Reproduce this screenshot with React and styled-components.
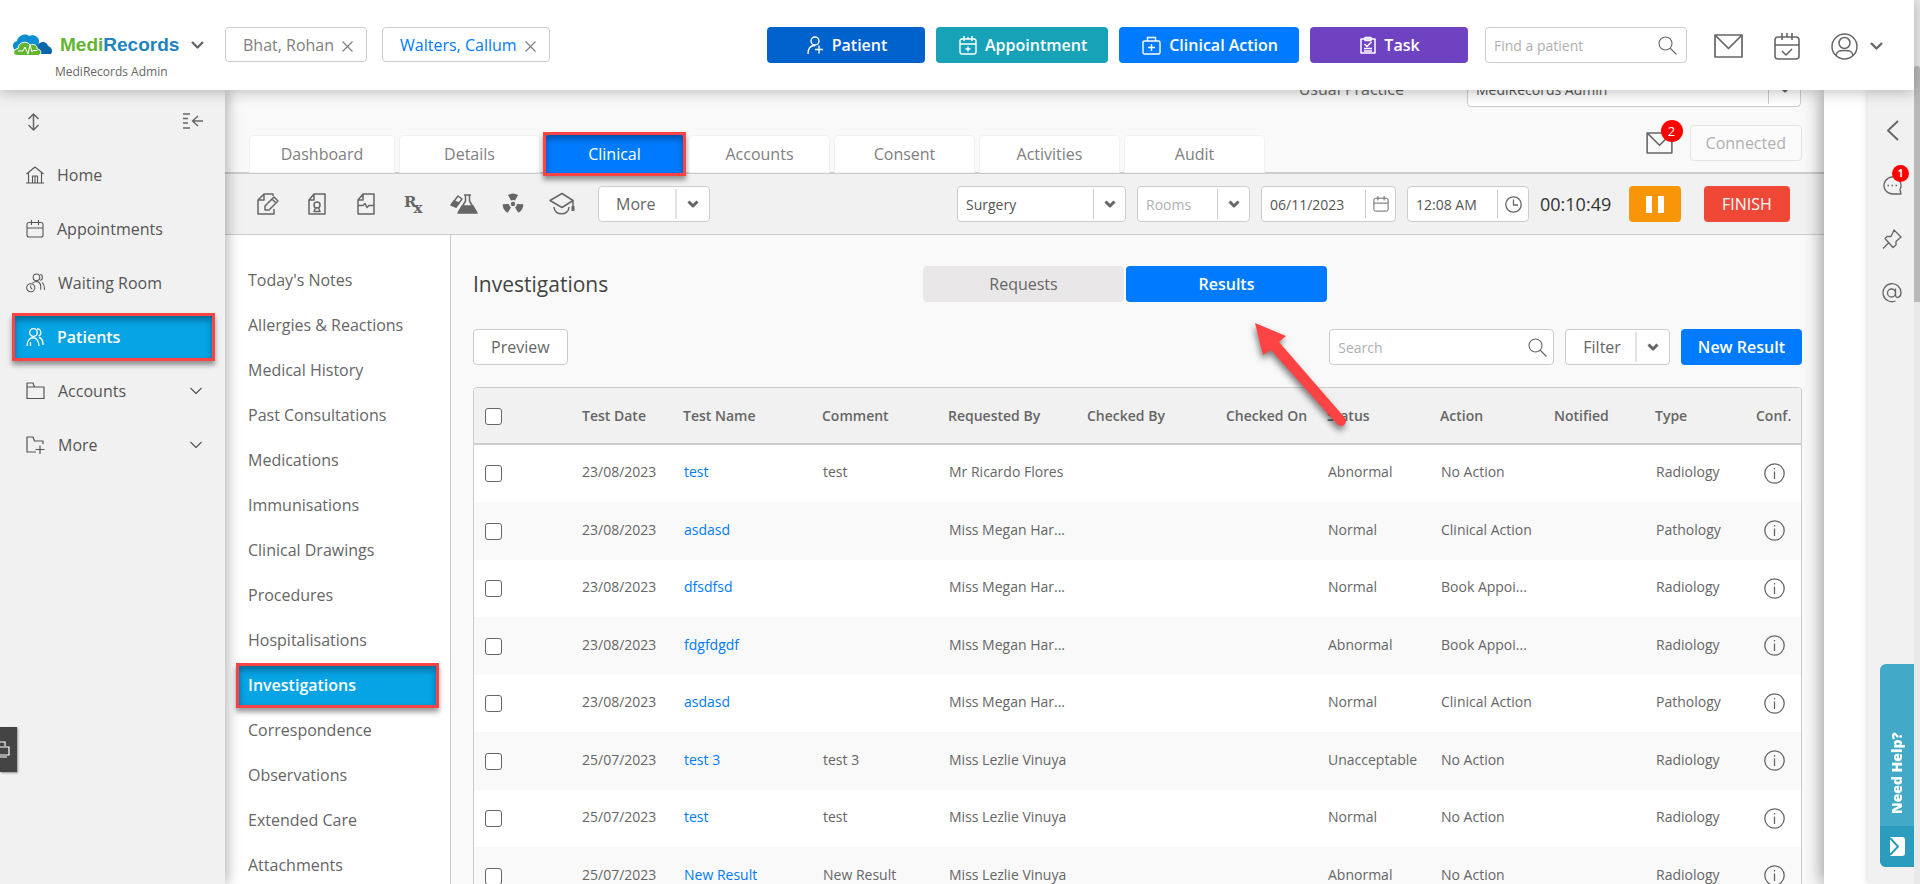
import React, { useState } from 'react';
import styled, { createGlobalStyle, css } from 'styled-components';

const GlobalStyle = createGlobalStyle`
  * {
    box-sizing: border-box;
  }

  body {
    margin: 0;
    background: #ffffff;
    color: #666666;
    font-family: "Open Sans", "Noto Sans", sans-serif;
    font-size: 14px;
    overflow: hidden;
  }

  button, input, select {
    font-family: inherit;
    color: inherit;
  }

  button {
    cursor: pointer;
  }

  svg {
    display: block;
    flex: none;
  }
`;

/* ---------- shell ---------- */

const Page = styled.div`
  display: flex;
  height: 100vh;
`;

const Shell = styled.div`
  flex: 1;
  min-width: 0;
  display: flex;
  flex-direction: column;
`;

const ScrollTrack = styled.div`
  width: 6px;
  padding-top: 66px;
  background: #e9e9e9;
`;

const ScrollThumb = styled.div`
  height: 236px;
  border-radius: 3px 3px 0 0;
  background: #b9b9b9;
`;

const Body = styled.div`
  flex: 1;
  min-height: 0;
  display: flex;
  overflow: hidden;
`;

/* ---------- header ---------- */

const Header = styled.header`
  position: relative;
  z-index: 5;
  display: flex;
  align-items: flex-start;
  height: 90px;
  padding: 27px 31px 0 12px;
  background: #ffffff;
  box-shadow: 0 2px 14px rgba(0, 0, 0, 0.25);
`;

const Brand = styled.div`
  width: 213px;
`;

const BrandRow = styled.button`
  display: flex;
  align-items: center;
  padding: 0;
  border: 0;
  background: none;
  height: 36px;
`;

const BrandName = styled.span`
  margin: 0 12px 0 8px;
  font-family: "Liberation Sans", Arial, sans-serif;
  font-size: 19px;
  font-weight: 700;
  color: #2183bd;

  b {
    color: #62b530;
  }
`;

const BrandAccount = styled.div`
  padding-left: 43px;
  font-size: 12px;
  line-height: 18px;
`;

const PatientChips = styled.div`
  display: flex;
  gap: 15px;
  flex: 1;
`;

const Chip = styled.div`
  display: flex;
  align-items: center;
  gap: 8px;
  height: 35px;
  padding: 0 13px 0 17px;
  border: 1px solid #cccccc;
  border-radius: 4px;
  white-space: nowrap;

  a {
    font-size: 16px;
    line-height: 20px;
    text-decoration: none;
    color: ${props => (props.$active ? '#007bff' : '#808080')};
  }

  button {
    padding: 3px 0 0;
    border: 0;
    background: none;
    color: #808080;
  }
`;

const HeaderActions = styled.div`
  display: flex;
  gap: 11px;
`;

const ActionButton = styled.button`
  display: flex;
  align-items: center;
  justify-content: center;
  gap: 8px;
  min-width: 158px;
  height: 36px;
  padding: 0 21px 0 23px;
  border: 0;
  border-radius: 4px;
  background: ${props => props.$color};
  color: #ffffff;
  font-size: 16px;
  font-weight: 600;
  white-space: nowrap;
`;

const SearchBox = styled.div`
  display: flex;
  align-items: center;
  width: ${props => props.$width};
  height: 36px;
  padding: 0 6px 0 8px;
  border: 1px solid #cccccc;
  border-radius: 4px;
  background: #ffffff;

  input {
    flex: 1;
    min-width: 0;
    padding: 0;
    border: 0;
    outline: 0;
    background: none;
    font-size: 14px;
  }

  input::placeholder {
    color: #b0b0b0;
  }
`;

const PatientSearch = styled(SearchBox)`
  margin-left: 17px;
  padding-right: 9px;
`;

const HeaderIcons = styled.div`
  display: flex;
  align-items: center;
  gap: 31px;
  height: 38px;
  margin-left: 27px;
`;

const IconButton = styled.button`
  position: relative;
  display: flex;
  align-items: center;
  justify-content: center;
  gap: 12px;
  padding: 0;
  border: 0;
  background: none;
  color: #666666;
`;

/* ---------- left sidebar ---------- */

const Sidebar = styled.nav`
  position: relative;
  z-index: 3;
  flex: none;
  width: 225px;
  background: #f1f1f1;
  box-shadow: 3px 0 12px rgba(0, 0, 0, 0.28);
`;

const SidebarTools = styled.div`
  display: flex;
  align-items: flex-start;
  justify-content: space-between;
  padding: 23px 22px 0 27px;
  height: 61px;
`;

const highlightFrame = css`
  &::after {
    content: "";
    position: absolute;
    inset: 0;
    border: 3px solid #fd4343;
    box-shadow: 0 4px 5px rgba(0, 0, 0, 0.4), inset 0 4px 6px rgba(0, 0, 0, 0.35);
    pointer-events: none;
  }
`;

const SidebarItem = styled.a`
  position: relative;
  display: flex;
  align-items: center;
  gap: 13px;
  height: 48px;
  margin: 0 10px 6px 12px;
  padding: 0 13px 0 14px;
  color: ${props => (props.$active ? '#ffffff' : '#555555')};
  background: ${props => (props.$active ? '#06a3e5' : 'none')};
  font-size: 16px;
  font-weight: ${props => (props.$active ? 600 : 500)};
  text-decoration: none;

  span {
    flex: 1;
  }

  ${props => props.$active && highlightFrame}
`;

const SideFlag = styled.button`
  position: absolute;
  left: 0;
  top: 637px;
  display: flex;
  align-items: center;
  width: 17px;
  height: 45px;
  padding: 0;
  border: 0;
  background: #444444;
  box-shadow: 1px 1px 2px rgba(0, 0, 0, 0.4);
`;

/* ---------- patient record ---------- */

const Record = styled.main`
  flex: 1;
  min-width: 0;
  display: flex;
  flex-direction: column;
  background: #f9f9f9;
`;

const PracticeRow = styled.div`
  display: flex;
  align-items: center;
  justify-content: flex-end;
  gap: 63px;
  margin-top: -19px;
  padding-right: 23px;
  font-size: 14px;

  label {
    font-size: 16px;
    font-weight: 500;
  }
`;

const TabRow = styled.div`
  display: flex;
  align-items: flex-start;
  justify-content: space-between;
  height: 67px;
  padding: 18px 22px 0 24px;
  border-bottom: 2px solid #cccccc;
`;

const Tabs = styled.div`
  display: flex;
  gap: 4px;
  padding-top: 10px;
`;

const Tab = styled.button`
  position: relative;
  width: 141px;
  height: 38px;
  padding: 0;
  border: 1px solid #f1f1f1;
  border-radius: 4px 4px 0 0;
  background: ${props => (props.$active ? '#007bff' : '#ffffff')};
  color: ${props => (props.$active ? '#ffffff' : '#808080')};
  font-size: 16px;

  &:first-child {
    width: 146px;
  }

  ${props => props.$active && css`
    border: 0;
    ${highlightFrame}

    &::after {
      inset: -3px -1px;
    }
  `}
`;

const RecordStatus = styled.div`
  display: flex;
  align-items: center;
  gap: 17px;
`;

const Badge = styled.span`
  position: absolute;
  left: ${props => props.$left}px;
  top: ${props => props.$top}px;
  width: ${props => props.$size}px;
  height: ${props => props.$size}px;
  border-radius: 50%;
  background: #ff0000;
  color: #ffffff;
  font-size: ${props => (props.$size > 20 ? 13 : 10)}px;
  font-weight: ${props => (props.$size > 20 ? 400 : 700)};
  line-height: ${props => props.$size}px;
  text-align: center;
`;

const PlainButton = styled.button`
  height: 36px;
  padding: 0 17px;
  border: 1px solid #cccccc;
  border-radius: 4px;
  background: #ffffff;
  font-size: 16px;
  font-weight: 500;
  color: #666666;

  &:disabled {
    padding: 0 15px;
    border-color: #e4e4e4;
    background: #fbfbfb;
    color: #b0b0b0;
  }
`;

const Toolbar = styled.div`
  display: flex;
  align-items: center;
  height: 61px;
  padding: 0 34px 0 18px;
  border-bottom: 1px solid #cccccc;
  background: #f1f1f1;
`;

const ToolIcons = styled.div`
  display: grid;
  grid-template-columns: repeat(7, 49px);
  margin-right: 12px;
`;

const SplitButton = styled.div`
  display: flex;
  align-items: center;
  height: 36px;
  border: 1px solid #cccccc;
  border-radius: 4px;
  background: #ffffff;

  button {
    height: 30px;
    padding: 0 ${props => props.$pad}px 0 17px;
    border: 0;
    background: none;
    font-size: 16px;
    font-weight: 500;
  }

  button + button {
    padding: 0 10px;
    border-left: 2px solid #e4e4e4;
  }
`;

const Fields = styled.div`
  display: flex;
  align-items: center;
  gap: 11px;
  margin-left: auto;
`;

const SelectBox = styled.div`
  display: flex;
  align-items: center;
  width: ${props => props.$width}px;
  height: 36px;
  padding-right: 9px;
  border: 1px solid #cccccc;
  border-radius: 4px;
  background: #ffffff;

  select {
    flex: 1;
    min-width: 0;
    height: 30px;
    margin-right: 10px;
    padding: 0 0 0 8px;
    border: 0;
    border-right: 1px solid #cccccc;
    outline: 0;
    background: none;
    appearance: none;
    font-size: 14px;
    color: ${props => (props.$empty ? '#b0b0b0' : '#555555')};
  }
`;

const PickerBox = styled.div`
  display: flex;
  align-items: center;
  width: ${props => props.$width}px;
  height: 36px;
  padding-right: 6px;
  border: 1px solid #cccccc;
  border-radius: 4px;
  background: #ffffff;

  input {
    flex: 1;
    min-width: 0;
    height: 28px;
    margin-right: 7px;
    padding: 0 0 0 8px;
    border: 0;
    border-right: 1px solid #cccccc;
    outline: 0;
    font-size: 14px;
    color: #555555;
  }
`;

const Timer = styled.span`
  width: 78px;
  font-size: 18px;
  color: #333333;
  white-space: nowrap;
`;

const PauseButton = styled.button`
  display: flex;
  align-items: center;
  justify-content: center;
  gap: 6px;
  width: 52px;
  height: 36px;
  margin-right: 12px;
  border: 0;
  border-radius: 4px;
  background: #f99509;

  i {
    width: 6px;
    height: 17px;
    background: #ffffff;
  }
`;

const FinishButton = styled.button`
  width: 86px;
  height: 36px;
  padding: 0;
  border: 0;
  border-radius: 4px;
  background: #f04836;
  color: #ffffff;
  font-size: 16px;
  font-weight: 500;
`;

const Columns = styled.div`
  flex: 1;
  min-height: 0;
  display: flex;
`;

const SectionMenu = styled.nav`
  flex: none;
  width: 226px;
  padding: 23px 11px 0 11px;
  border-right: 1px solid #cccccc;
  background: #ffffff;
`;

const SectionLink = styled.a`
  position: relative;
  display: block;
  height: 45px;
  padding: 0 12px;
  border-radius: 3px;
  background: ${props => (props.$active ? '#06a3e5' : 'none')};
  color: ${props => (props.$active ? '#ffffff' : '#666666')};
  font-size: 16px;
  font-weight: ${props => (props.$active ? 600 : 500)};
  line-height: 45px;
  text-decoration: none;
  white-space: nowrap;

  ${props => props.$active && highlightFrame}
`;

/* ---------- investigations ---------- */

const Panel = styled.section`
  flex: 1;
  min-width: 0;
  padding: 31px 22px 0;
`;

const PanelHead = styled.div`
  display: flex;
  align-items: center;
  height: 36px;
`;

const Title = styled.h1`
  width: 450px;
  margin: 0;
  color: #444444;
  font-size: 21px;
  font-weight: 500;
`;

const Segments = styled.div`
  position: relative;
  display: flex;
  gap: 2px;
`;

const Segment = styled.button`
  width: 201px;
  height: 36px;
  border: 0;
  border-radius: 4px;
  background: ${props => (props.$active ? '#007bff' : '#e9e7e8')};
  color: ${props => (props.$active ? '#ffffff' : '#666666')};
  font-size: 16px;
  font-weight: ${props => (props.$active ? 600 : 500)};
`;

const Pointer = styled.svg`
  position: absolute;
  left: 322px;
  top: 47px;
  z-index: 2;
  filter: drop-shadow(-1px 4px 3px rgba(0, 0, 0, 0.5));
  pointer-events: none;
`;

const PanelTools = styled.div`
  display: flex;
  gap: 11px;
  margin: 27px 0 22px;

  > :first-child {
    margin-right: auto;
  }
`;

const PrimaryButton = styled.button`
  height: 36px;
  padding: 0 17px;
  border: 0;
  border-radius: 4px;
  background: #007bff;
  color: #ffffff;
  font-size: 16px;
  font-weight: 600;
`;

const TableFrame = styled.div`
  border: 1px solid #cccccc;
  border-radius: 4px;
  overflow: hidden;
`;

const ResultTable = styled.table`
  width: 100%;
  border-collapse: collapse;
  table-layout: fixed;
  color: #666666;
  font-size: 14px;

  th, td {
    padding: 0;
    text-align: left;
    white-space: nowrap;
  }

  thead tr {
    height: 56px;
    border-bottom: 2px solid #cccccc;
    background: #f1f1f1;
  }

  th {
    font-weight: 600;
  }

  td {
    padding: 0 0 4px 1px;
  }

  td:nth-child(2) {
    padding-left: 0;
  }

  th:first-child {
    padding-left: 11px;
  }

  td:first-child {
    padding: 0 0 1px 11px;
  }

  td:last-child {
    padding: 0 0 1px 8px;
  }

  tbody tr {
    height: 58px;
    background: #ffffff;
  }

  tbody tr:nth-child(even) {
    background: #f9f9f9;
  }

  tbody tr:nth-child(2n + 3) {
    height: 57px;
  }

  td a {
    color: #007bff;
    text-decoration: none;
    font-weight: 500;
  }
`;

const Checkbox = styled.input`
  appearance: none;
  display: block;
  width: 17px;
  height: 17px;
  margin: 1px 0 0;
  border: 1px solid #666666;
  border-radius: 3px;
  background: #ffffff;
`;

/* ---------- right side ---------- */

const Gutter = styled.div`
  position: relative;
  z-index: 1;
  flex: none;
  width: 44px;
  background: #ffffff;
  box-shadow: -2px 0 18px rgba(0, 0, 0, 0.4);
`;

const Rail = styled.aside`
  position: relative;
  z-index: 2;
  flex: none;
  display: flex;
  flex-direction: column;
  align-items: center;
  gap: 34px;
  width: 46px;
  padding: 30px 0 0 2px;
  background: #f1f1f1;
  box-shadow: -1px 0 6px rgba(0, 0, 0, 0.14);
`;

const HelpTab = styled.button`
  position: absolute;
  right: 0;
  bottom: 17px;
  display: flex;
  flex-direction: column;
  align-items: center;
  width: 34px;
  height: 203px;
  padding: 0;
  border: 0;
  border-radius: 6px 0 0 6px;
  background: #42a9c9;
  overflow: hidden;
  color: #ffffff;

  span {
    flex: 1;
    padding-top: 12px;
    writing-mode: vertical-rl;
    transform: rotate(180deg);
    font-size: 14px;
    font-weight: 800;
    line-height: 34px;
    text-align: left;
  }

  div {
    display: flex;
    align-items: center;
    justify-content: center;
    width: 100%;
    height: 41px;
    background: #2b9cbd;
  }
`;

/* ---------- icons ---------- */

const Icon = ({ w = 20, h = w, box = `0 0 ${w} ${h}`, sw = 1.3, children }) => (
  <svg
    width={w}
    height={h}
    viewBox={box}
    fill="none"
    stroke="currentColor"
    strokeWidth={sw}
    strokeLinejoin="round"
    aria-hidden="true"
  >
    {children}
  </svg>
);

const CloudLogo = () => (
  <svg width="40" height="23" viewBox="0 0 40 23" aria-hidden="true">
    <path d="M3 16C0 14 0 8 5 7C6 1 14 -1 17 2C22 0 27 3 27 7L26 17Z" fill="#0a8fd2" />
    <path d="M23 20C19 17 22 12 26 11C28 7 35 7 36 12C40 13 41 18 39 20Z" fill="#0765a8" />
    <path d="M5 21.500C0 21 1 15 6 14.500C6 8 15 6 18 11C22 9 26 12 25 15C30 15 30 21 26 21.500Z" fill="#62b530" stroke="#ffffff" strokeWidth="1" />
    <path d="M6 17H11L13 13L16 20L18 11L20 18L21 16.500H25" fill="none" stroke="#ffffff" strokeWidth="1" />
  </svg>
);

const Caret = () => (
  <Icon w={12} h={8} sw={3}><path d="M1.500 1.500L6 6L10.500 1.500" /></Icon>
);

const WideCaret = () => (
  <Icon w={13} h={8} sw={2.4}><path d="M1 1L6.500 6.500L12 1" /></Icon>
);

const ThinCaret = () => (
  <Icon w={12} h={8} sw={1.1}><path d="M0.500 1L6 6.500L11.500 1" /></Icon>
);

const CloseIcon = () => (
  <Icon w={11} sw={1.2}><path d="M0.500 0.500L10.500 10.500M10.500 0.500L0.500 10.500" /></Icon>
);

const SearchIcon = () => (
  <Icon w={19} sw={1.1}><circle cx="7.500" cy="7.500" r="6.500" /><path d="M12 12L18.500 18.500" /></Icon>
);

const MailIcon = ({ w = 29, h = 24 }) => (
  <Icon w={w} h={h} box="0 0 29 24" sw={1.7}>
    <rect x="1" y="1" width="27" height="22" />
    <path d="M1 1L14.500 14.500L28 1" />
  </Icon>
);

const CalendarCheckIcon = () => (
  <Icon w={26} h={27} sw={1.6}>
    <rect x="1" y="4" width="24" height="22" rx="3" />
    <path d="M1 12H25M8 0V7M13 0V4M18 0V7M8 18L12 22L18 16" />
  </Icon>
);

const UserCircleIcon = () => (
  <Icon w={27} sw={1.5}>
    <circle cx="13.500" cy="13.500" r="12.500" />
    <circle cx="13.500" cy="10" r="5.500" />
    <path d="M5 22.500C6 17.500 9 17.500 13.500 17.500S21 17.500 22 22.500" />
  </Icon>
);

const PatientAddIcon = () => (
  <Icon w={17} h={18} sw={1.4}>
    <circle cx="8" cy="5" r="4" />
    <path d="M1 18C1 12 3 9.500 8 9.500M12 9.500V17.500M8 13.500H16" />
  </Icon>
);

const AppointmentAddIcon = () => (
  <Icon w={18} h={19} sw={1.4}>
    <rect x="1" y="3" width="16" height="15" rx="2" />
    <path d="M1 8H17M5 0V5M9 1V3M13 0V5M9 10.500V15.500M6.500 13H11.500" />
  </Icon>
);

const KitIcon = () => (
  <Icon w={19} h={19} sw={1.4}>
    <rect x="1" y="5" width="17" height="13" rx="1.500" />
    <path d="M5.500 5V1.500H13.500V5M9.500 8V15M6 11.500H13" />
  </Icon>
);

const TaskIcon = () => (
  <Icon w={16} h={18} sw={1.5}>
    <rect x="1" y="3" width="14" height="14" />
    <path d="M5 1.500H11V4.500H5ZM4.500 8L7 10.500L11.500 6M4 12.500H12M4 15H12" />
  </Icon>
);

const ResizeIcon = () => (
  <Icon w={13} h={18} sw={1.5}><path d="M6.500 1V17M1.500 6L6.500 1L11.500 6M1.500 12L6.500 17L11.500 12" /></Icon>
);

const CollapseIcon = () => (
  <Icon w={20} h={16} sw={1.4}>
    <path d="M0 1H7M0 5.500H5M0 10H5M0 15H7M9.500 8H20M15 3L9.500 8L15 13" />
  </Icon>
);

const HomeIcon = () => (
  <Icon w={18} h={18} sw={1.1}>
    <path d="M0.500 8L9 1L17.500 8M2.500 6.500V17M15.500 6.500V17M0 17H18M6.500 17V10H11.500V17M9 10V17" />
  </Icon>
);

const CalendarIcon = ({ w = 18 }) => (
  <Icon w={w} box="0 0 18 18" sw={1.1}>
    <rect x="1" y="2.500" width="16" height="14.500" rx="2" />
    <path d="M1 8H17M5.500 0V5M12.500 0V5" />
  </Icon>
);

const WaitingIcon = () => (
  <Icon w={19} h={20} box="0 0 20 20" sw={1.1}>
    <circle cx="11" cy="4" r="3.500" />
    <path d="M15 1C18 1 18 7 15 7M7 10C10 7.500 15 8 15.500 13V17M17 9.500C19 11 19.500 13 19.500 17" />
    <circle cx="5" cy="15" r="4.300" />
    <path d="M5 12.500V15L6.500 16.500" />
  </Icon>
);

const PatientsIcon = () => (
  <Icon w={18} h={18} sw={1.3}>
    <circle cx="7.500" cy="4.500" r="3.800" />
    <path d="M11 1C15.500 0 16 7 12.500 8M1 18C1 7 13 7 13 18M4.500 14V18M13 9.500C16 10 17 13 17 17" />
  </Icon>
);

const FolderIcon = () => (
  <Icon w={19} h={18} sw={1.2}><path d="M1 16.500V1H7L8.500 5H18V16.500ZM1 5H8.500" /></Icon>
);

const FolderAddIcon = () => (
  <Icon w={19} h={18} sw={1.2}><path d="M10 16H1V1H7L8.500 5H17V8M14 9.500V18M9.500 13.500H18.500" /></Icon>
);

const EditDocIcon = () => (
  <Icon w={24} h={24} sw={1.5}>
    <path d="M17 4V2H8L2 8V22H18V17M8 2V8H2" />
    <path d="M9 14L18 5L22 9L13 18H9ZM16 7L20 11" />
  </Icon>
);

const CertificateIcon = () => (
  <Icon w={18} h={24} sw={1.5}>
    <path d="M6 2H17V22H1V8ZM6 2V8H1" />
    <circle cx="9" cy="13" r="3" />
    <path d="M7.500 16L6 19.500H12L10.500 16" />
  </Icon>
);

const PulseDocIcon = () => (
  <Icon w={18} h={24} sw={1.5}>
    <path d="M6 2H17V22H1V8ZM6 2V8H1M1 13.500H6L8 11.500L10 15.500L12 13.500H17" />
  </Icon>
);

const RxIcon = () => (
  <svg width="24" height="24" viewBox="0 0 24 24" fill="#666666" aria-hidden="true">
    <text x="1" y="15" fontFamily="DejaVu Serif" fontWeight="700" fontSize="15">
      R<tspan dx="-3" dy="6">x</tspan>
    </text>
  </svg>
);

const LabIcon = () => (
  <Icon w={28} h={24} sw={1.5}>
    <path d="M14 3H21M15.500 3V9L9 20H26L19.500 9V3" />
    <path d="M12 14H23L27 21H8Z" fill="currentColor" />
    <path d="M2 12L8 4L12 7L6 15Z" />
    <path d="M1 13L4 9L9 11L6 15Z" fill="currentColor" />
  </Icon>
);

const RadiationIcon = () => (
  <Icon w={22} h={24} box="-11 -12 22 24" sw={0}>
    <g fill="currentColor">
      <circle r="2.200" />
      <path d="M-2 -3.500L-5 -9Q0 -12 5 -9L2 -3.500Q0 -4.500 -2 -3.500Z" />
      <path transform="rotate(120)" d="M-2 -3.500L-5 -9Q0 -12 5 -9L2 -3.500Q0 -4.500 -2 -3.500Z" />
      <path transform="rotate(240)" d="M-2 -3.500L-5 -9Q0 -12 5 -9L2 -3.500Q0 -4.500 -2 -3.500Z" />
    </g>
  </Icon>
);

const GraduateIcon = () => (
  <Icon w={26} h={24} sw={1.5}>
    <path d="M1 8.500L13 1.500L24 8.500L13 15.500ZM24 8.500V16M5 15C5 24 20 24 20 15" />
    <path d="M24 14V19" strokeWidth="3" />
  </Icon>
);

const ClockIcon = () => (
  <Icon w={17} sw={1.3}><circle cx="8.500" cy="8.500" r="7.700" /><path d="M8.500 3.500V9H13" /></Icon>
);

const InfoIcon = () => (
  <Icon w={21} sw={1.3}>
    <circle cx="10.500" cy="10.500" r="9.700" />
    <path d="M10.500 8.500V16M10.500 5V6.500" />
  </Icon>
);

const BackIcon = () => (
  <Icon w={13} h={21} sw={1.9}><path d="M12 1L2 10.500L12 20" /></Icon>
);

const ChatIcon = () => (
  <Icon w={20} sw={1.3}>
    <path d="M18 14.500L19 19H10A8.500 8.500 0 1 1 18 14.500Z" />
    <path d="M5.500 10.500H7M9.500 10.500H11M13.500 10.500H15" />
  </Icon>
);

const PinIcon = () => (
  <Icon w={20} sw={1.3}>
    <path d="M12 1L19 8L14 12.500V16L11 18.500L3 9.500L5 7.500L9 7.500Z" />
    <path d="M7 13.500L1 19.500" />
  </Icon>
);

const AtIcon = () => (
  <Icon w={20} sw={1.3}>
    <circle cx="9.500" cy="10" r="4" />
    <path d="M13.500 5.500V12C13.500 16 19 15 19 10A9 9 0 1 0 13.500 18" />
  </Icon>
);

/* ---------- data ---------- */

const sidebarItems = [
  { label: 'Home', icon: HomeIcon },
  { label: 'Appointments', icon: CalendarIcon },
  { label: 'Waiting Room', icon: WaitingIcon },
  { label: 'Patients', icon: PatientsIcon },
  { label: 'Accounts', icon: FolderIcon, expandable: true },
  { label: 'More', icon: FolderAddIcon, expandable: true },
];

const tabs = ['Dashboard', 'Details', 'Clinical', 'Accounts', 'Consent', 'Activities', 'Audit'];

const tools = [
  { label: 'Note', icon: EditDocIcon },
  { label: 'Certificate', icon: CertificateIcon },
  { label: 'Report', icon: PulseDocIcon },
  { label: 'Prescription', icon: RxIcon },
  { label: 'Pathology', icon: LabIcon },
  { label: 'Radiology', icon: RadiationIcon },
  { label: 'Education', icon: GraduateIcon },
];

const sections = [
  "Today's Notes",
  'Allergies & Reactions',
  'Medical History',
  'Past Consultations',
  'Medications',
  'Immunisations',
  'Clinical Drawings',
  'Procedures',
  'Hospitalisations',
  'Investigations',
  'Correspondence',
  'Observations',
  'Extended Care',
  'Attachments',
];

const columns = [
  { label: 'Test Date', width: 101 },
  { label: 'Test Name', width: 139 },
  { label: 'Comment', width: 126 },
  { label: 'Requested By', width: 139 },
  { label: 'Checked By', width: 139 },
  { label: 'Checked On', width: 101 },
  { label: 'Status', width: 113 },
  { label: 'Action', width: 114 },
  { label: 'Notified', width: 101 },
  { label: 'Type', width: 101 },
  { label: 'Conf.', width: 46 },
];

const results = [
  ['23/08/2023', 'test', 'test', 'Mr Ricardo Flores', 'Abnormal', 'No Action', 'Radiology'],
  ['23/08/2023', 'asdasd', '', 'Miss Megan Har...', 'Normal', 'Clinical Action', 'Pathology'],
  ['23/08/2023', 'dfsdfsd', '', 'Miss Megan Har...', 'Normal', 'Book Appoi...', 'Radiology'],
  ['23/08/2023', 'fdgfdgdf', '', 'Miss Megan Har...', 'Abnormal', 'Book Appoi...', 'Radiology'],
  ['23/08/2023', 'asdasd', '', 'Miss Megan Har...', 'Normal', 'Clinical Action', 'Pathology'],
  ['25/07/2023', 'test 3', 'test 3', 'Miss Lezlie Vinuya', 'Unacceptable', 'No Action', 'Radiology'],
  ['25/07/2023', 'test', 'test', 'Miss Lezlie Vinuya', 'Normal', 'No Action', 'Radiology'],
  ['25/07/2023', 'New Result', 'New Result', 'Miss Lezlie Vinuya', 'Abnormal', 'No Action', 'Radiology'],
];

/* ---------- parts ---------- */

const TopBar = () => (
  <Header>
    <Brand>
      <BrandRow>
        <CloudLogo />
        <BrandName><b>Medi</b>Records</BrandName>
        <WideCaret />
      </BrandRow>
      <BrandAccount>MediRecords Admin</BrandAccount>
    </Brand>
    <PatientChips>
      <Chip>
        <a href="#rohan">Bhat, Rohan</a>
        <button aria-label="Close Bhat, Rohan"><CloseIcon /></button>
      </Chip>
      <Chip $active>
        <a href="#callum">Walters, Callum</a>
        <button aria-label="Close Walters, Callum"><CloseIcon /></button>
      </Chip>
    </PatientChips>
    <HeaderActions>
      <ActionButton $color="#0062cc"><PatientAddIcon />Patient</ActionButton>
      <ActionButton $color="#17a2b8"><AppointmentAddIcon />Appointment</ActionButton>
      <ActionButton $color="#007bff"><KitIcon />Clinical Action</ActionButton>
      <ActionButton $color="#6f42c1"><TaskIcon />Task</ActionButton>
    </HeaderActions>
    <PatientSearch $width="202px">
      <input type="text" aria-label="Find a patient" placeholder="Find a patient" />
      <SearchIcon />
    </PatientSearch>
    <HeaderIcons>
      <IconButton aria-label="Messages"><MailIcon /></IconButton>
      <IconButton aria-label="Calendar"><CalendarCheckIcon /></IconButton>
      <IconButton aria-label="Account"><UserCircleIcon /><WideCaret /></IconButton>
    </HeaderIcons>
  </Header>
);

const SideNav = () => (
  <Sidebar>
    <SidebarTools>
      <IconButton aria-label="Resize"><ResizeIcon /></IconButton>
      <IconButton aria-label="Collapse"><CollapseIcon /></IconButton>
    </SidebarTools>
    {sidebarItems.map(({ label, icon: ItemIcon, expandable }) => (
      <SidebarItem key={label} href={`#${label}`} $active={label === 'Patients'}>
        <ItemIcon />
        <span>{label}</span>
        {expandable && <ThinCaret />}
      </SidebarItem>
    ))}
    <SideFlag aria-label="Screen">
      <svg width="10" height="18" viewBox="0 0 10 18" fill="none" stroke="#ffffff" strokeWidth="1.200">
        <path d="M0 1H5V5M0 6H9V14H0M0 16H7" />
      </svg>
    </SideFlag>
  </Sidebar>
);

const ConsultToolbar = () => (
  <Toolbar>
    <ToolIcons>
      {tools.map(({ label, icon: ToolIcon }) => (
        <IconButton key={label} aria-label={label}><ToolIcon /></IconButton>
      ))}
    </ToolIcons>
    <SplitButton $pad={19}>
      <button>More</button>
      <button aria-label="Open more"><Caret /></button>
    </SplitButton>
    <Fields>
      <SelectBox $width={169}>
        <select aria-label="Location" defaultValue="Surgery"><option>Surgery</option></select>
        <Caret />
      </SelectBox>
      <SelectBox $width={113} $empty>
        <select aria-label="Rooms" defaultValue="Rooms"><option>Rooms</option></select>
        <Caret />
      </SelectBox>
      <PickerBox $width={135}>
        <input type="text" aria-label="Date" defaultValue="06/11/2023" />
        <CalendarIcon w={16} />
      </PickerBox>
      <PickerBox $width={122}>
        <input type="text" aria-label="Time" defaultValue="12:08 AM" />
        <ClockIcon />
      </PickerBox>
      <Timer>00:10:49</Timer>
      <PauseButton aria-label="Pause"><i /><i /></PauseButton>
      <FinishButton>FINISH</FinishButton>
    </Fields>
  </Toolbar>
);

const Results = () => {
  const [selected, setSelected] = useState([]);
  const allSelected = selected.length === results.length;

  const toggleRow = (index) => {
    setSelected(selected.includes(index) ? selected.filter(i => i !== index) : [...selected, index]);
  };

  const toggleAll = () => {
    setSelected(allSelected ? [] : results.map((_, index) => index));
  };

  return (
    <TableFrame>
      <ResultTable>
        <colgroup>
          <col width={108} />
          {columns.map(column => <col key={column.label} width={column.width} />)}
        </colgroup>
        <thead>
          <tr>
            <th>
              <Checkbox type="checkbox" aria-label="Select all" checked={allSelected} onChange={toggleAll} />
            </th>
            {columns.map(column => <th key={column.label}>{column.label}</th>)}
          </tr>
        </thead>
        <tbody>
          {results.map(([date, name, comment, requestedBy, status, action, type], index) => (
            <tr key={index}>
              <td>
                <Checkbox
                  type="checkbox"
                  aria-label={`Select ${name}`}
                  checked={selected.includes(index)}
                  onChange={() => toggleRow(index)}
                />
              </td>
              <td>{date}</td>
              <td><a href="#result">{name}</a></td>
              <td>{comment}</td>
              <td>{requestedBy}</td>
              <td />
              <td />
              <td>{status}</td>
              <td>{action}</td>
              <td />
              <td>{type}</td>
              <td><IconButton aria-label="Details"><InfoIcon /></IconButton></td>
            </tr>
          ))}
        </tbody>
      </ResultTable>
    </TableFrame>
  );
};

const Investigations = () => (
  <Panel>
    <PanelHead>
      <Title>Investigations</Title>
      <Segments>
        <Segment>Requests</Segment>
        <Segment $active>Results</Segment>
        <Pointer width="110" height="120" viewBox="0 0 110 120" aria-hidden="true">
          <path d="M10 10L41 23L34 29L100 105A5 5 0 0 1 92 111L26 37L18 42Z" fill="#fd4343" />
        </Pointer>
      </Segments>
    </PanelHead>
    <PanelTools>
      <PlainButton>Preview</PlainButton>
      <SearchBox $width="225px">
        <input type="text" aria-label="Search" placeholder="Search" />
        <SearchIcon />
      </SearchBox>
      <SplitButton $pad={14}>
        <button>Filter</button>
        <button aria-label="Open filter"><Caret /></button>
      </SplitButton>
      <PrimaryButton>New Result</PrimaryButton>
    </PanelTools>
    <Results />
  </Panel>
);

const App = () => (
  <>
    <GlobalStyle />
    <Page>
      <Shell>
        <TopBar />
        <Body>
          <SideNav />
          <Record>
            <PracticeRow>
              <label htmlFor="practice">Usual Practice</label>
              <SelectBox $width={334}>
                <select id="practice" defaultValue="MediRecords Admin">
                  <option>MediRecords Admin</option>
                </select>
                <Caret />
              </SelectBox>
            </PracticeRow>
            <TabRow>
              <Tabs>
                {tabs.map(tab => <Tab key={tab} $active={tab === 'Clinical'}>{tab}</Tab>)}
              </Tabs>
              <RecordStatus>
                <IconButton aria-label="Patient messages">
                  <MailIcon w={27} h={22} />
                  <Badge $size={22} $left={15} $top={-12}>2</Badge>
                </IconButton>
                <PlainButton disabled>Connected</PlainButton>
              </RecordStatus>
            </TabRow>
            <ConsultToolbar />
            <Columns>
              <SectionMenu>
                {sections.map(section => (
                  <SectionLink key={section} href="#section" $active={section === 'Investigations'}>
                    {section}
                  </SectionLink>
                ))}
              </SectionMenu>
              <Investigations />
            </Columns>
          </Record>
          <Gutter />
          <Rail>
            <IconButton aria-label="Expand"><BackIcon /></IconButton>
            <IconButton aria-label="Chat">
              <ChatIcon />
              <Badge $size={17} $left={10} $top={-10}>1</Badge>
            </IconButton>
            <IconButton aria-label="Pinned"><PinIcon /></IconButton>
            <IconButton aria-label="Mentions"><AtIcon /></IconButton>
            <HelpTab>
              <span>Need Help?</span>
              <div>
                <svg width="15" height="19" viewBox="0 0 15 19">
                  <path d="M0 0H12Q15 0 15 3V16Q15 19 12 19H0Z" fill="#ffffff" />
                  <path d="M0 1L8 9.500L0 18" fill="none" stroke="#2b9cbd" strokeWidth="2" />
                </svg>
              </div>
            </HelpTab>
          </Rail>
        </Body>
      </Shell>
      <ScrollTrack><ScrollThumb /></ScrollTrack>
    </Page>
  </>
);

export default App;
